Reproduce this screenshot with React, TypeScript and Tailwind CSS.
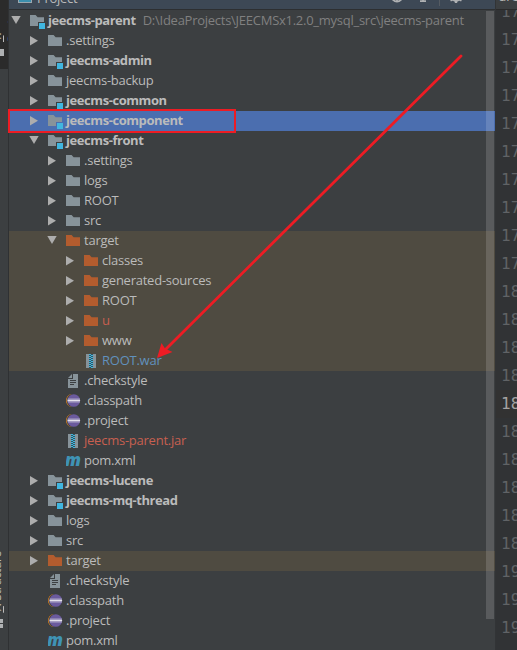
import React from 'react';
import { clsx } from 'clsx';

type IconKind = 'folder' | 'module' | 'excluded' | 'text' | 'eclipse' | 'archive' | 'maven';

interface TreeItem {
  name: string;
  depth: number;
  icon: IconKind;
  arrow?: 'open' | 'closed';
  tone?: 'red' | 'blue';
  selected?: boolean;
  build?: boolean;
  path?: string;
}

const items: TreeItem[] = [
  { name: 'jeecms-parent', depth: 0, icon: 'module', arrow: 'open', path: 'D:\\IdeaProjects\\JEECMSx1.2.0_mysql_src\\jeecms-parent' },
  { name: '.settings', depth: 1, icon: 'folder', arrow: 'closed' },
  { name: 'jeecms-admin', depth: 1, icon: 'module', arrow: 'closed' },
  { name: 'jeecms-backup', depth: 1, icon: 'folder', arrow: 'closed' },
  { name: 'jeecms-common', depth: 1, icon: 'module', arrow: 'closed' },
  { name: 'jeecms-component', depth: 1, icon: 'module', arrow: 'closed', selected: true },
  { name: 'jeecms-front', depth: 1, icon: 'module', arrow: 'open' },
  { name: '.settings', depth: 2, icon: 'folder', arrow: 'closed' },
  { name: 'logs', depth: 2, icon: 'folder', arrow: 'closed' },
  { name: 'ROOT', depth: 2, icon: 'folder', arrow: 'closed' },
  { name: 'src', depth: 2, icon: 'folder', arrow: 'closed' },
  { name: 'target', depth: 2, icon: 'excluded', arrow: 'open', build: true },
  { name: 'classes', depth: 3, icon: 'excluded', arrow: 'closed', build: true },
  { name: 'generated-sources', depth: 3, icon: 'excluded', arrow: 'closed', build: true },
  { name: 'ROOT', depth: 3, icon: 'excluded', arrow: 'closed', build: true },
  { name: 'u', depth: 3, icon: 'excluded', arrow: 'closed', build: true, tone: 'red' },
  { name: 'www', depth: 3, icon: 'excluded', arrow: 'closed', build: true },
  { name: 'ROOT.war', depth: 3, icon: 'archive', build: true, tone: 'blue' },
  { name: '.checkstyle', depth: 2, icon: 'text' },
  { name: '.classpath', depth: 2, icon: 'eclipse' },
  { name: '.project', depth: 2, icon: 'eclipse' },
  { name: 'jeecms-parent.jar', depth: 2, icon: 'archive', tone: 'red' },
  { name: 'pom.xml', depth: 2, icon: 'maven' },
  { name: 'jeecms-lucene', depth: 1, icon: 'module', arrow: 'closed' },
  { name: 'jeecms-mq-thread', depth: 1, icon: 'module', arrow: 'closed' },
  { name: 'logs', depth: 1, icon: 'folder', arrow: 'closed' },
  { name: 'src', depth: 1, icon: 'folder', arrow: 'closed' },
  { name: 'target', depth: 1, icon: 'excluded', arrow: 'closed', build: true },
  { name: '.checkstyle', depth: 1, icon: 'text' },
  { name: '.classpath', depth: 1, icon: 'eclipse' },
  { name: '.project', depth: 1, icon: 'eclipse' },
  { name: 'pom.xml', depth: 1, icon: 'maven' },
];

const lineNumbers = Array.from({ length: 23 }, (_, i) => 170 + i);
const currentLine = 184;

const Arrow = ({ dir }: { dir?: 'open' | 'closed' }) => (
  <svg className="w-[10px] h-5 shrink-0" viewBox="0 0 10 20">
    {dir === 'closed' && <path d="M1 5v9.4L9 9.7z" fill="#adadad" />}
    {dir === 'open' && <path d="M0.3 5h9.4L5 13z" fill="#adadad" />}
  </svg>
);

const FileIcon = ({ kind }: { kind: IconKind }) => {
  const folder = 'M0 4h5.6l2 2.2H14V15H0z';
  return (
    <svg className="w-4 h-5 shrink-0" viewBox="0 0 16 20">
      {kind === 'folder' && <path d={folder} fill="#87939a" />}
      {kind === 'excluded' && <path d={folder} fill="#b35c2e" />}
      {kind === 'module' && (
        <>
          <path d="M0 4h5.6l2 2.2H14V11H8v4H0z" fill="#87939a" />
          <rect x="9" y="12" width="6" height="6" fill="#40b6e0" />
        </>
      )}
      {kind === 'text' && (
        <>
          <path d="M7 3h5v14H2V8h5z" fill="#87939a" />
          <path d="M6 3v4H2z" fill="#87939a" />
          <path d="M4 9.5h6M4 11.5h6M4 13.5h4" stroke="#3c3f41" />
        </>
      )}
      {kind === 'eclipse' && (
        <>
          <ellipse cx="6" cy="9.5" rx="6" ry="6.5" fill="#f28c1b" />
          <circle cx="7.3" cy="9.5" r="6.7" fill="#3c3f41" />
          <circle cx="7.8" cy="9.5" r="6.3" fill="#6b5a9e" />
          <path d="M1.7 8h12.2M1.7 11h12.2" stroke="#aaa5c4" />
          <path d="M1.5 9.5h12.6" stroke="#e3e1ec" strokeWidth="1.6" />
        </>
      )}
      {kind === 'archive' && (
        <>
          <path d="M2 3h3v14H2zM9 3h3v14H9z" fill="#87939a" />
          <path d="M5 3h4v14H5z" fill="#35545f" />
          <path d="M6 3v14" stroke="#40b6e0" strokeWidth="2" strokeDasharray="1 1" />
          <path d="M8 4v13" stroke="#40b6e0" strokeWidth="2" strokeDasharray="1 1" />
        </>
      )}
      {kind === 'maven' && (
        <text x="-1" y="15" fill="#3f93b5" fontFamily="Open Sans, sans-serif" fontSize="18" fontWeight="800" fontStyle="italic" textLength="16" lengthAdjust="spacingAndGlyphs">
          m
        </text>
      )}
    </svg>
  );
};

const indents = ['pl-[2px]', 'pl-[20px]', 'pl-[38px]', 'pl-[56px]'];

const TreeRow = ({ item }: { item: TreeItem }) => (
  <div
    className={clsx(
      'flex h-5 shrink-0 items-center whitespace-nowrap',
      indents[item.depth],
      item.selected && 'bg-[#4b6eaf]',
      item.build && 'bg-[#4f4b41]'
    )}
  >
    <Arrow dir={item.arrow} />
    <div className="w-[9px] shrink-0" />
    <FileIcon kind={item.icon} />
    <span
      className={clsx(
        'ml-[2px] pb-[2px] leading-5',
        item.icon === 'module' ? 'font-bold tracking-[-0.43px]' : 'tracking-[-0.24px]',
        item.tone === 'red' && 'text-[#c75f50]',
        item.tone === 'blue' && 'text-[#6191bd]'
      )}
    >
      {item.name}
    </span>
    {item.path && <span className="ml-[7px] pb-[2px] leading-5 tracking-[-0.26px] text-[#808080]">{item.path}</span>}
  </div>
);

const SideBar = () => (
  <div className="flex w-2 shrink-0 flex-col items-start overflow-hidden bg-[#3c3f41] text-[12px] tracking-[-0.3px] text-[#bbbbbb]">
    <div className="flex h-[69px] w-2 shrink-0 flex-col items-end bg-[#2b2b2b]">
      <div className="mr-[3px] flex h-[42px] w-4 shrink-0 rotate-180 [writing-mode:vertical-rl]">
        <span className="leading-4">
          <u>1</u>: Project
        </span>
      </div>
      <div className="mt-[7px] mr-1 h-[7px] w-1 shrink-0 bg-[#afb1b3]" />
    </div>
    <div className="flex h-[544px] w-2 shrink-0 flex-col items-end justify-end">
      <div className="mr-[3px] flex w-4 rotate-180 [writing-mode:vertical-rl]">
        <span className="leading-4">
          <u>7</u>: Structure
        </span>
      </div>
    </div>
    <div className="mt-[6px] h-1 w-[3px] shrink-0 bg-[#afb1b3]" />
    <div className="mt-px h-1 w-[3px] shrink-0 bg-[#afb1b3]" />
  </div>
);

const TitleBar = () => (
  <div className="flex h-[9px] shrink-0 items-start overflow-hidden bg-[#3d4855] pl-[9px]">
    <div className="h-[3px] w-[14px] border border-t-0 border-[#9aa7b0] bg-[#3b8fae]" />
    <span className="-mt-[11px] ml-[5px] leading-[18px] tracking-[-0.3px]">Project</span>
    <svg className="ml-auto h-[9px] w-[110px] shrink-0" viewBox="0 0 110 9" fill="none" stroke="#afb1b3" strokeWidth="1.8">
      <path d="M6.5 -4a5.5 5.5 0 0 0 11 0M12 -5V2" />
      <path d="M35 1.2h6M38 -3V2" />
      <path d="M54.5 0v6" stroke="#555b62" strokeWidth="1" />
      <circle cx="71" cy="-3" r="4" />
      <path d="M71 0v3M66 -1l1 2M76 -1l-1 2" strokeWidth="2.4" />
    </svg>
  </div>
);

const Gutter = () => (
  <div className="flex w-[21px] shrink-0 flex-col overflow-hidden bg-[#313335] font-['DejaVu_Sans_Mono'] text-[16px] text-[#606366]">
    <div className="flex h-[9px] shrink-0 items-start overflow-hidden bg-[#3c3f41] pl-[3px]">
      <span className="-mt-[13px] font-['Open_Sans'] text-[13px] leading-[18px] text-[#bbbbbb]">are</span>
    </div>
    <div className="h-px shrink-0 bg-[#2b2b2b]" />
    <div className="flex flex-col overflow-hidden">
      <div className="-mt-[12px] flex flex-col">
        {lineNumbers.map(n => (
          <div key={n} className={clsx('h-7 shrink-0 pl-[5px] leading-7', n === currentLine && 'bg-[#323232] text-[#a4a3a3]')}>
            {n}
          </div>
        ))}
      </div>
    </div>
  </div>
);

export default function App() {
  return (
    <div className="relative flex h-[650px] w-[517px] overflow-hidden bg-[#3c3f41] font-['Open_Sans','Noto_Sans',sans-serif] text-[13px] text-[#bbbbbb]">
      <SideBar />
      <div className="w-px shrink-0 bg-[#2f3133]" />
      <div className="flex min-w-0 flex-1 flex-col">
        <TitleBar />
        <div className="h-px shrink-0 bg-[#2d2f31]" />
        <div className="flex flex-col pt-px">
          {items.map((item, i) => (
            <TreeRow key={i} item={item} />
          ))}
        </div>
      </div>
      <div className="w-px shrink-0 bg-[#323436]" />
      <Gutter />

      {/* scrollbar thumb, lies over the row highlights */}
      <div className="absolute top-[11px] left-[486px] h-[608px] w-2 bg-white/15" />

      {/* annotations */}
      <div className="absolute top-[109px] left-2 h-6 w-[228px] border-2 border-[#ed1c24]" />
      <svg className="absolute inset-0 h-full w-full" viewBox="0 0 517 650">
        <path d="M461 56L166 349" stroke="#ed1c24" strokeWidth="2.8" strokeLinecap="round" />
        <path d="M157 358L161.500 343L165 348.500L172.500 352z" fill="#ed1c24" />
      </svg>
    </div>
  );
}
